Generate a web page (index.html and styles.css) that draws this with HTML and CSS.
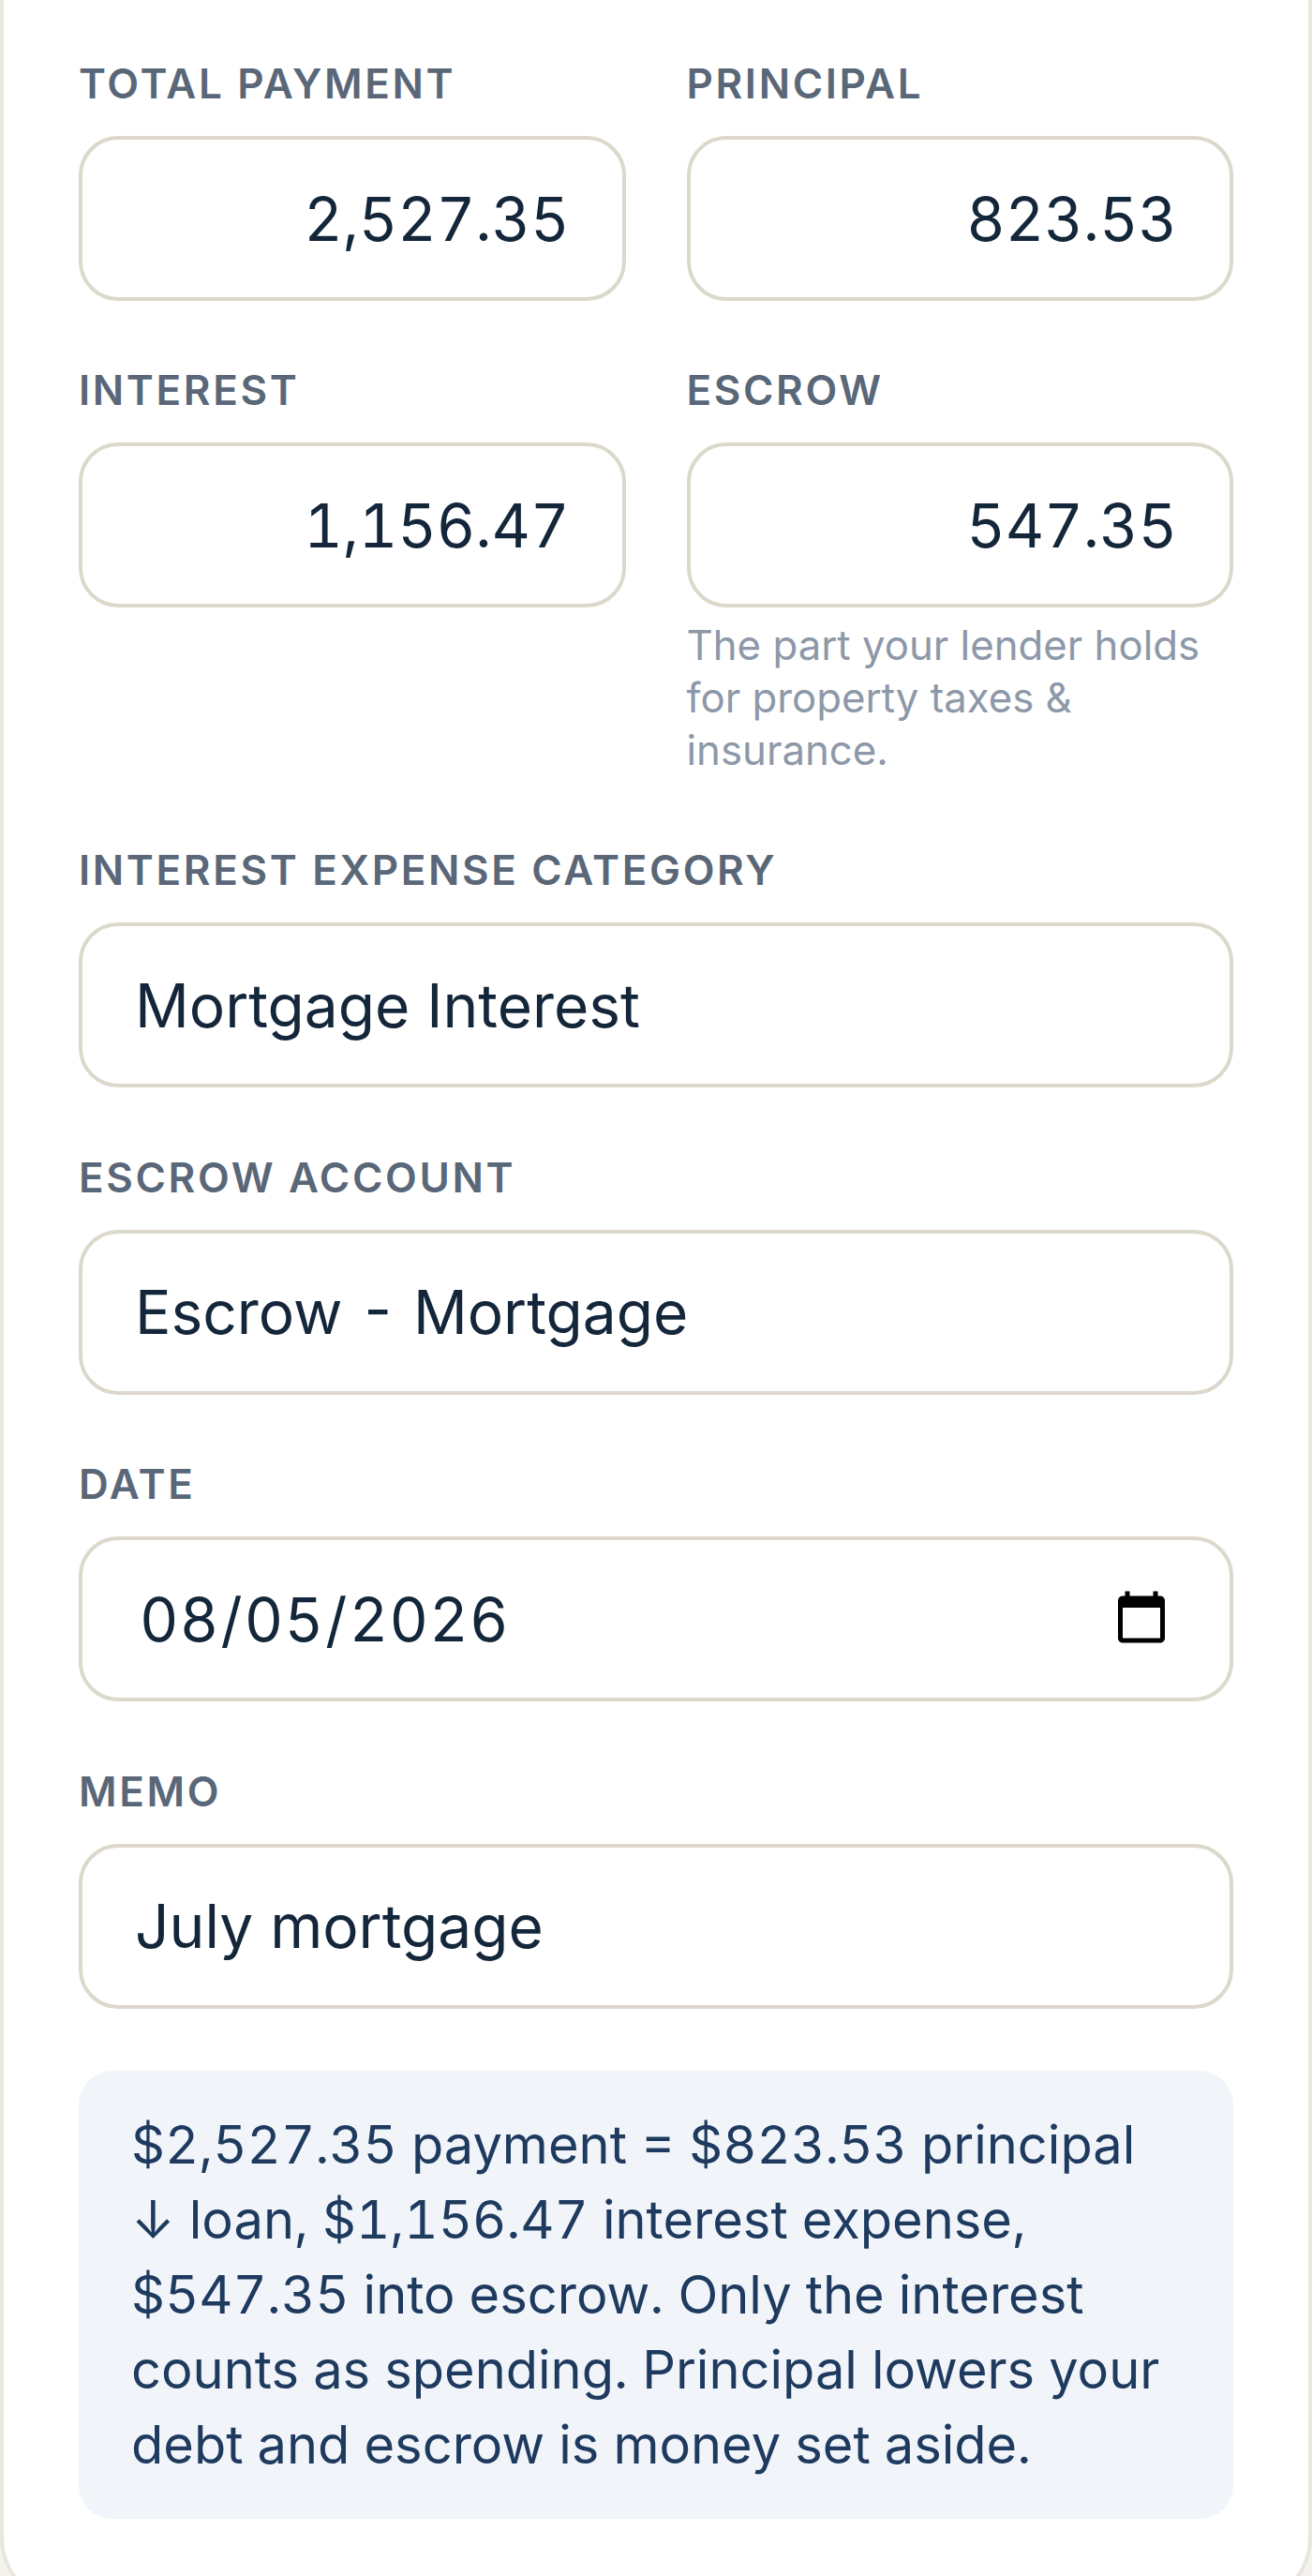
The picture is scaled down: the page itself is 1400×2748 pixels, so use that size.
FILE: index.html
```html
<!DOCTYPE html>
<html lang="en">
<head>
    <meta charset="UTF-8">
    <meta name="viewport" content="width=device-width, initial-scale=1.0">
    <title>Split mortgage payment</title>
    <link rel="stylesheet" href="styles.css">
</head>
<body>
    <div class="card">
        <form class="split-form">
            <div class="two-col">
                <div class="field">
                    <label for="total">Total payment</label>
                    <input class="amount" id="total" type="text" value="2,527.35">
                </div>
                <div class="field">
                    <label for="principal">Principal</label>
                    <input class="amount" id="principal" type="text" value="823.53">
                </div>
                <div class="field">
                    <label for="interest">Interest</label>
                    <input class="amount" id="interest" type="text" value="1,156.47">
                </div>
                <div class="field">
                    <label for="escrow">Escrow</label>
                    <input class="amount" id="escrow" type="text" value="547.35">
                    <p class="hint">The part your lender holds for property taxes &amp; insurance.</p>
                </div>
            </div>
            <div class="field">
                <label for="category">Interest expense category</label>
                <select id="category">
                    <option>Mortgage Interest</option>
                </select>
            </div>
            <div class="field">
                <label for="account">Escrow account</label>
                <select class="account" id="account">
                    <option>Escrow - Mortgage</option>
                </select>
            </div>
            <div class="field">
                <label for="date">Date</label>
                <input class="date" id="date" type="date" value="2026-08-05">
            </div>
            <div class="field memo-field">
                <label for="memo">Memo</label>
                <input id="memo" type="text" value="July mortgage">
            </div>
            <p class="summary">$2,527.35 payment = $823.53 principal ↓ loan, $1,156.47 interest expense, $547.35 into escrow. Only the interest counts as spending. Principal lowers your debt and escrow is money set aside.</p>
        </form>
    </div>
</body>
</html>
```

FILE: styles.css
```css
* {
    box-sizing: border-box;
}
html, body {
    height: 2748px;
    overflow: hidden;
}
body {
    margin: 0;
    font-family: Inter, "Noto Sans", sans-serif;
    background-color: #f4f3ee;
    color: #14263a;
}
.card {
    height: 2778px;
    padding: 0 80px;
    background-color: #ffffff;
    border: 4px solid #e8e6dd;
    border-top: none;
    border-radius: 0 0 70px 70px;
}
.split-form {
    padding-top: 66px;
}
.two-col {
    display: grid;
    grid-template-columns: 1fr 1fr;
    column-gap: 65px;
}
.field {
    display: flex;
    flex-direction: column;
    min-width: 0;
    margin-bottom: 72.5px;
}
.two-col .field {
    margin-bottom: 72px;
}
.memo-field {
    margin-bottom: 66px;
}
.field label {
    font-size: 44px;
    line-height: 46px;
    font-weight: 600;
    letter-spacing: 2.64px;
    text-transform: uppercase;
    color: #5a6778;
    margin-bottom: 33px;
}
.field input, .field select {
    width: 100%;
    height: 176px;
    padding: 0 56px;
    font-family: inherit;
    font-size: 64px;
    color: #14263a;
    background-color: #ffffff;
    border: 4px solid #dcd8cb;
    border-radius: 42px;
    outline: none;
    appearance: none;
}
.field .account {
    word-spacing: 5px;
}
.field .amount, .field .date {
    font-variant-numeric: tabular-nums;
}
.field .amount {
    text-align: right;
}
.field .date {
    padding: 0 60px;
    letter-spacing: 1.25px;
}
.hint {
    margin: 13px 0 4px;
    font-size: 43.75px;
    line-height: 56px;
    color: #8d98a8;
}
.summary {
    margin: 0;
    padding: 39px 56px;
    font-size: 56px;
    line-height: 80px;
    font-variant-numeric: tabular-nums;
    color: #1e3a5f;
    background-color: #f1f5f9;
    border-radius: 36px;
}
```
